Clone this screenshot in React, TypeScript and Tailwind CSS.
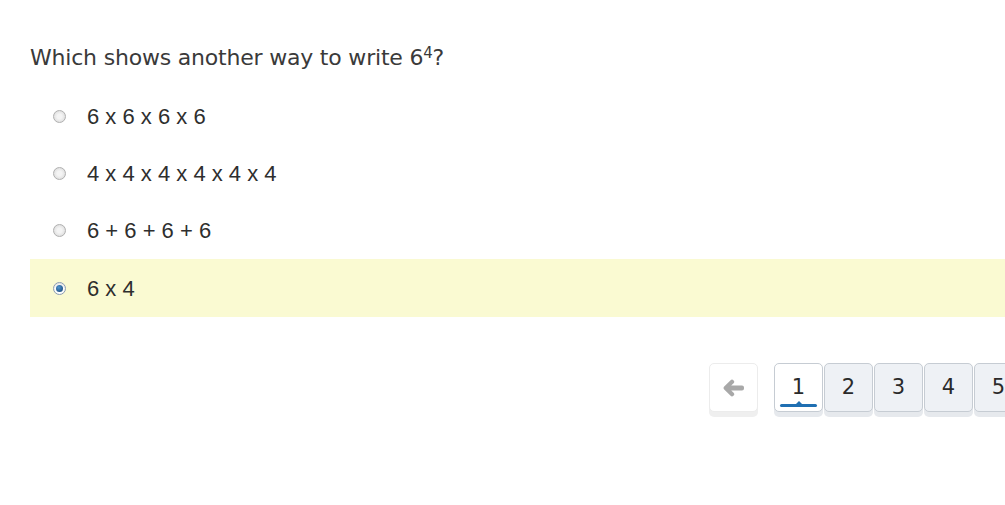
const options = ["6 x 6 x 6 x 6", "4 x 4 x 4 x 4 x 4 x 4", "6 + 6 + 6 + 6", "6 x 4"];
const selected = 3;

function Radio({ checked }: { checked: boolean }) {
  if (checked) {
    return (
      <span className="flex h-[13px] w-[13px] items-center justify-center rounded-full border border-[#8a9bb0] bg-white shadow-[inset_0_1px_2px_rgba(0,0,0,0.15)]">
        <span className="h-[7px] w-[7px] rounded-full bg-[radial-gradient(circle_at_40%_35%,#4f95d0,#123f6e)]" />
      </span>
    );
  }
  return (
    <span className="h-[13px] w-[13px] rounded-full border border-[#b0b0b0] bg-[radial-gradient(circle_at_50%_50%,#f4f4f4_30%,#d4d4d4)]" />
  );
}

function ArrowLeft() {
  return (
    <svg width="22" height="18" viewBox="0 0 22 18" fill="#a8a8a8">
      <path d="M1.2 7.6 7.6 1.2a2 2 0 0 1 2.8 0l.2.2a2 2 0 0 1 0 2.8L8.2 6.5H19a2 2 0 0 1 2 2v1a2 2 0 0 1-2 2H8.2l2.4 2.3a2 2 0 0 1 0 2.8l-.2.2a2 2 0 0 1-2.8 0L1.2 10.4a2 2 0 0 1 0-2.8z" />
    </svg>
  );
}

export default function App() {
  return (
    <main className="min-h-screen overflow-hidden bg-white pl-[30px] pt-[42px] text-[#333]">
      <h1 className="font-['DejaVu_Sans',sans-serif] text-[22px] leading-[32px] tracking-[-0.2px] text-[#3a3a3a]">
        Which shows another way to write 6<sup className="text-[15px]">4</sup>?
      </h1>

      <ul className="mt-[14px] w-[1000px] font-['Liberation_Sans',Arial,sans-serif] text-[22px] text-[#2e2e2e]">
        {options.map((o, i) => (
          <li
            key={o}
            className={`flex items-center ${i === selected ? "h-[58px] bg-[#fafad2]" : "h-[57px]"}`}
          >
            <span className="flex w-[57px] justify-center pl-[1px]">
              <Radio checked={i === selected} />
            </span>
            <span>{o}</span>
          </li>
        ))}
      </ul>

      <nav className="ml-[679px] mt-[46px] flex w-max items-start font-['DejaVu_Sans',sans-serif]">
        <button className="mr-[16px] flex h-[49px] w-[49px] shrink-0 items-center justify-center rounded-[5px] border border-[#ececec] bg-white shadow-[0_5px_0_#efefef]">
          <ArrowLeft />
        </button>
        <div className="flex gap-[1px]">
          {[1, 2, 3, 4, 5].map((n) => (
            <button
              key={n}
              className={`relative flex h-[49px] w-[49px] shrink-0 items-center justify-center rounded-[5px] border border-[#c6ccd3] text-[21px] font-medium text-[#2a2a2a] shadow-[0_5px_0_#e6e9ed] ${n === 1 ? "bg-white" : "bg-[#eef1f5]"}`}
            >
              {n}
              {n === 1 && (
                <span className="absolute bottom-[4px] left-[5px] right-[5px] h-[3px] rounded-full bg-[#1f6fb2]">
                  <span className="absolute left-1/2 top-[-3px] h-0 w-0 -translate-x-1/2 border-x-[4px] border-b-[4px] border-x-transparent border-b-[#1f6fb2]" />
                </span>
              )}
            </button>
          ))}
        </div>
      </nav>
    </main>
  );
}
